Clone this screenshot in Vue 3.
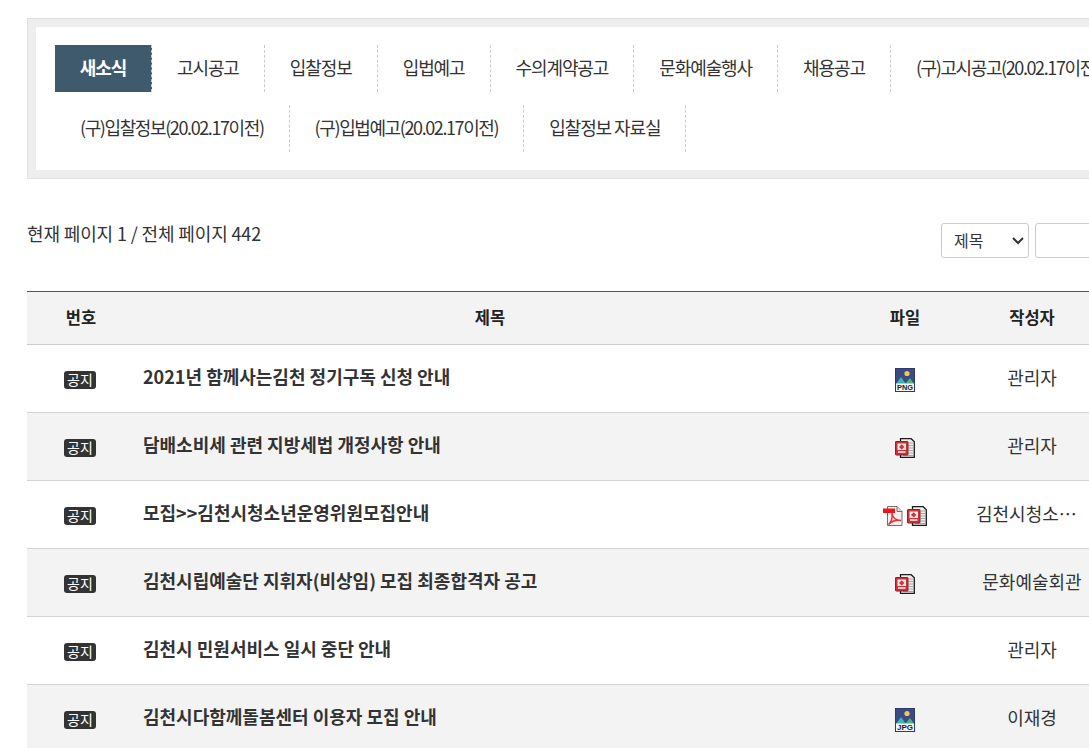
<script setup>
const tabs = ['새소식','고시공고','입찰정보','입법예고','수의계약공고','문화예술행사','채용공고','(구)고시공고(20.02.17이전)','(구)입찰정보(20.02.17이전)','(구)입법예고(20.02.17이전)','입찰정보 자료실']
const rows = [
  { title:'2021년 함께사는김천 정기구독 신청 안내', files:['png'], author:'관리자' },
  { title:'담배소비세 관련 지방세법 개정사항 안내', files:['hwp'], author:'관리자' },
  { title:'모집>>김천시청소년운영위원모집안내', files:['pdf','hwp'], author:'김천시청소년수련관' },
  { title:'김천시립예술단 지휘자(비상임) 모집 최종합격자 공고', files:['hwp'], author:'문화예술회관' },
  { title:'김천시 민원서비스 일시 중단 안내', files:[], author:'관리자' },
  { title:'김천시다함께돌봄센터 이용자 모집 안내', files:['jpg'], author:'이재경' },
]
</script>

<template>
  <div class="page">
    <div class="wrap">
      <div class="tabbox">
        <ul class="tabs">
          <li v-for="(t,i) in tabs" :key="t" class="tab" :class="{ on: i===0, old: t.startsWith('(') }">{{ t }}</li>
        </ul>
      </div>

      <div class="info">
        <p class="count">현재 페이지 1 / 전체 페이지 442</p>
        <div class="search">
          <div class="select"><span class="sel-label">제목</span>
            <svg class="chev" width="14" height="10" viewBox="0 0 14 10"><path d="M2 2l5 5 5-5" fill="none" stroke="#333" stroke-width="2"/></svg>
          </div>
          <div class="input"></div>
        </div>
      </div>

      <div class="table">
        <div class="row head">
          <div class="c num">번호</div><div class="c title">제목</div><div class="c file">파일</div><div class="c author">작성자</div>
        </div>
        <div v-for="(r,i) in rows" :key="r.title" class="row" :class="{ alt: i%2===1 }">
          <div class="c num"><span class="badge">공지</span></div>
          <div class="c title subject">{{ r.title }}</div>
          <div class="c file">
            <span class="icons">
              <template v-for="(f,j) in r.files" :key="j">
                <svg v-if="f==='png'||f==='jpg'" class="ic tall" width="20" height="24" viewBox="0 0 20 24">
                  <rect x=".5" y=".5" width="19" height="23" fill="#3b4a80" stroke="#2c3a70"/>
                  <circle cx="12" cy="5.5" r="2.6" fill="#f0c850"/>
                  <path d="M1 16l5-7 5 7z" fill="#3cb4b8"/>
                  <path d="M10 16l5-6 4 6z" fill="#52b080"/>
                  <rect x="1" y="15.5" width="18" height="7.5" fill="#f6f6f6"/>
                  <text x="10" y="22.4" text-anchor="middle" textLength="16" lengthAdjust="spacingAndGlyphs" class="ictext">{{ f.toUpperCase() }}</text>
                </svg>
                <svg v-else-if="f==='hwp'" class="ic" width="20" height="20" viewBox="0 0 20 20">
                  <path d="M5.5 .7H16.2L19.3 3.8V19.3H5.5z" fill="#efefeb" stroke="#1c1c1c" stroke-width="1.3"/>
                  <path d="M13.5 5h4.5M13.5 7.5h4.5M13.5 10h4.5M13.5 12.5h4.5M13.5 15h4.5M8 17.5h10" stroke="#a4a4a4"/>
                  <rect x=".5" y="3.5" width="12.5" height="13.5" rx=".5" fill="#c9353a" stroke="#8e2226"/>
                  <rect x="2.5" y="5.5" width="8.5" height="6.5" fill="#f8e4e4"/>
                  <path d="M6.7 6.2l2.7 2.7-2.7 2.7L4 8.9z" fill="#c9353a"/>
                  <rect x="3" y="13" width="7.5" height="2" fill="#f0c4c4"/>
                </svg>
                <svg v-else class="ic" width="20" height="20" viewBox="0 0 20 20">
                  <path d="M4.5 .5H14l5 5v14H4.5z" fill="#f3efef" stroke="#6e6e6e"/>
                  <path d="M14 .5v5h5" fill="#d8d8d8" stroke="#6e6e6e"/>
                  <rect x="0" y="2.5" width="12" height="4.5" fill="#ea1620"/>
                  <path d="M5.5 18.5c2.5-2 4-6.5 3.5-11.5.3 3.5 2.5 7 9 7.5-4.5-.5-9 .5-12.5 4z" fill="none" stroke="#e4303a" stroke-width="1.5"/>
                </svg>
              </template>
            </span>
          </div>
          <div class="c author"><span class="ell">{{ r.author }}</span></div>
        </div>
      </div>
    </div>
  </div>
</template>

<style>
html, body { margin: 0; overflow: hidden; background: #fff; }
</style>

<style scoped>
.page { width: 1089px; height: 748px; overflow: hidden; font-family: "Noto Sans CJK KR", "Noto Sans", sans-serif; color: #333; }
.wrap { width: 1180px; padding: 18px 0 0 27px; }
.tabbox { border: 1px solid #e0e0e0; background: #eee; padding: 8px; }
.tabs { list-style: none; margin: 0; padding: 18px 19px 18px; background: #fff; display: flex; flex-wrap: wrap; row-gap: 13px; }
.tab { height: 47px; line-height: 45px; padding: 0 25px; font-size: 18px; letter-spacing: -1.1px; border-right: 1px dashed #ccc; box-sizing: border-box; white-space: nowrap; }
.tab.old { letter-spacing: -1.4px; }
.tab.on { background: #3f5a6c; color: #fff; font-weight: 700; padding: 0 24.8px; }
.info { display: flex; justify-content: space-between; align-items: flex-start; margin-top: 44px; height: 68px; }
.count { margin: 0; font-size: 18px; line-height: 20px; letter-spacing: -0.13px; }
.search { display: flex; gap: 6px; }
.select { width: 88px; height: 35px; box-sizing: border-box; border: 1px solid #ccc; border-radius: 3px; display: flex; align-items: center; justify-content: space-between; padding: 0 3px 0 12px; font-size: 16px; }
.sel-label { padding-bottom: 2px; }
.input { width: 172px; height: 35px; box-sizing: border-box; border: 1px solid #ccc; border-radius: 3px; }
.table { border-top: 1px solid #555; }
.row { display: flex; height: 68px; border-bottom: 1px solid #d4d4d4; box-sizing: border-box; align-items: center; }
.row.head { height: 53px; background: #f3f3f3; border-bottom-color: #ccc; font-weight: 700; }
.row.alt { background: #f3f3f3; }
.head .c { font-size: 16.5px; color: #222; padding-bottom: 2px; }
.c { text-align: center; font-size: 18px; box-sizing: border-box; }
.num { width: 108px; }
.title { width: 710px; }
.subject { text-align: left; padding: 0 0 5px 8px; font-weight: 700; font-size: 18px; letter-spacing: 0; }
.file { width: 120px; }
.author { width: 134px; padding: 0 11px 4px; }
.ell { display: block; overflow: hidden; text-overflow: ellipsis; white-space: nowrap; }
.badge { display: inline-block; width: 32px; height: 18px; line-height: 17px; margin: 5px 0 0 -2px; background: #333; color: #fff; border-radius: 3px; font-size: 14px; vertical-align: top; }
.icons { display: flex; justify-content: center; gap: 4px; align-items: center; height: 24px; margin-top: 2px; }
.ic { display: block; }
.ictext { font: 700 8px "Liberation Sans", sans-serif; fill: #1d1d1d; }
</style>
